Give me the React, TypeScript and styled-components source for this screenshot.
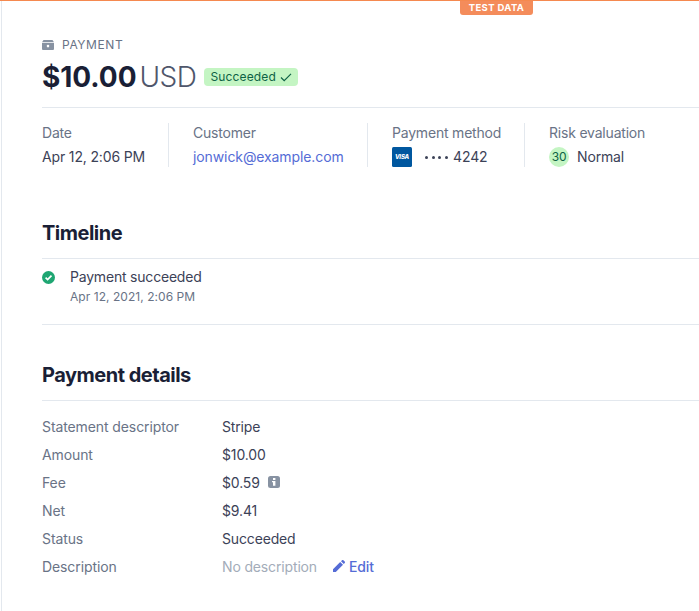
import React from "react";
import styled, { createGlobalStyle } from "styled-components";

const Global = createGlobalStyle`
  html, body { margin: 0; padding: 0; background: #fff; overflow: hidden; }
  body { font-family: Inter, "Liberation Sans", sans-serif; font-size: 14px; color: #3c4257; letter-spacing: -0.1px; }
`;

const Frame = styled.div`
  position: relative;
  box-sizing: border-box;
  width: 699px;
  height: 611px;
  border-top: 1px solid #f5894f;
  padding: 35px 0 0 42px;
  overflow: hidden;
  &::before {
    content: "";
    position: absolute;
    left: 1px;
    top: 0;
    bottom: 0;
    width: 1px;
    background: #e3e8ee;
  }
`;

const TestBadge = styled.div`
  position: absolute;
  top: 0;
  left: 460px;
  width: 73px;
  height: 14px;
  background: #f48c5b;
  border-radius: 0 0 3px 3px;
  color: #fff;
  font-size: 9.5px;
  line-height: 14px;
  font-weight: 700;
  text-align: center;
  letter-spacing: 0.35px;
`;

const Eyebrow = styled.div`
  display: flex;
  align-items: center;
  gap: 8px;
  height: 18px;
  color: #697386;
  font-size: 12px;
  line-height: 18px;
  font-weight: 400;
  letter-spacing: 0.6px;
`;

const TitleRow = styled.div`
  display: flex;
  align-items: center;
  height: 36px;
  margin-top: 5px;
`;

const Amount = styled.span`
  font-size: 28px;
  line-height: 36px;
  font-weight: 700;
  color: #1a1f36;
  letter-spacing: -0.05px;
`;

const Currency = styled.span`
  font-size: 28px;
  line-height: 36px;
  font-weight: 300;
  color: #4f566b;
  margin-left: 3px;
  letter-spacing: -0.5px;
`;

const StatusPill = styled.span`
  display: inline-flex;
  align-items: center;
  gap: 4px;
  height: 18px;
  margin-left: 8px;
  padding: 0 6px;
  background: #c4f5c3;
  border-radius: 4px;
  color: #0e6245;
  font-size: 12px;
  font-weight: 400;
  line-height: 18px;
  letter-spacing: 0.15px;
`;

const Rule = styled.div`
  height: 1px;
  background: #e3e8ee;
`;

const HeaderRule = styled(Rule)`
  margin-top: 12px;
`;

const Meta = styled.div`
  display: flex;
  margin-top: 15px;
  height: 44px;
`;

const MetaCell = styled.div<{ $w: number; $last?: boolean }>`
  box-sizing: border-box;
  width: ${(p) => p.$w}px;
  margin-right: ${(p) => (p.$last ? 0 : 24)}px;
  border-right: ${(p) => (p.$last ? "none" : "1px solid #e3e8ee")};
  flex: none;
`;

const MetaLabel = styled.div`
  font-size: 14px;
  line-height: 20px;
  color: #697386;
  white-space: nowrap;
  letter-spacing: -0.2px;
`;

const MetaValue = styled.div`
  display: flex;
  align-items: center;
  height: 20px;
  margin-top: 4px;
  font-size: 14px;
  line-height: 20px;
  color: #3c4257;
  white-space: nowrap;
  letter-spacing: -0.15px;
`;

const Link = styled.span`
  color: #556cd6;
  font-weight: 400;
  letter-spacing: -0.1px;
`;

const Dots = styled.span`
  display: inline-flex;
  gap: 3.7px;
  margin-left: 13px;
  margin-right: 5px;
`;

const Dot = styled.i`
  display: block;
  width: 3px;
  height: 3px;
  border-radius: 50%;
  background: #3c4257;
`;

const RiskScore = styled.span`
  display: inline-flex;
  justify-content: center;
  align-items: center;
  width: 20px;
  height: 20px;
  border-radius: 50%;
  background: #c4f5c3;
  color: #0e6245;
  font-size: 12px;
  margin-right: 8px;
`;

const SectionTitle = styled.h2<{ $top: number }>`
  margin: ${(p) => p.$top}px 0 0;
  font-size: 20px;
  line-height: 28px;
  font-weight: 700;
  color: #1a1f36;
  letter-spacing: -0.5px;
  padding-bottom: 11px;
  border-bottom: 1px solid #e3e8ee;
`;

const TimelineRow = styled.div`
  display: flex;
  gap: 15px;
  padding: 8px 0 17px;
  border-bottom: 1px solid #e3e8ee;
`;

const TimelineIcon = styled.div`
  width: 13px;
  height: 20px;
  display: flex;
  align-items: center;
  flex: none;
`;

const EventTitle = styled.div`
  font-size: 14px;
  line-height: 20px;
  color: #3c4257;
  letter-spacing: -0.2px;
`;

const EventTime = styled.div`
  font-size: 12px;
  line-height: 20px;
  color: #697386;
  letter-spacing: 0.05px;
`;

const Details = styled.div`
  display: grid;
  grid-template-columns: 180px 1fr;
  grid-auto-rows: 28px;
  margin-top: 11px;
`;

const DLabel = styled.div`
  display: flex;
  align-items: center;
  color: #697386;
  font-size: 14px;
`;

const DValue = styled.div`
  display: flex;
  align-items: center;
  color: #3c4257;
  font-size: 14px;
  letter-spacing: -0.15px;
`;

const Muted = styled.span`
  color: #a3acb9;
`;

const EditLink = styled.span`
  display: inline-flex;
  align-items: center;
  gap: 4px;
  margin-left: 16px;
  color: #556cd6;
  font-weight: 500;
`;

const InfoIcon = styled.svg`
  margin-left: 8px;
`;

export default function App() {
  return (
    <Frame>
      <Global />
      <TestBadge>TEST DATA</TestBadge>
      <Eyebrow>
        <svg width="12" height="12" viewBox="0 0 12 12">
          <path d="M1.5 1h9L12 3.2H0z" fill="#8792a2" />
          <path fillRule="evenodd" d="M0 4h12v6a1 1 0 0 1-1 1H1a1 1 0 0 1-1-1zM6 5.8a1.3 1.3 0 1 0 0 2.6 1.3 1.3 0 0 0 0-2.6z" fill="#8792a2" />
        </svg>
        PAYMENT
      </Eyebrow>
      <TitleRow>
        <Amount>$10.00</Amount>
        <Currency>USD</Currency>
        <StatusPill>
          Succeeded
          <svg width="12" height="12" viewBox="0 0 12 12" fill="none">
            <path d="M1 6.5L4.2 9.6 11 2.8" stroke="#0e6245" strokeWidth="1.2" />
          </svg>
        </StatusPill>
      </TitleRow>
      <HeaderRule />
      <Meta>
        <MetaCell $w={127}>
          <MetaLabel>Date</MetaLabel>
          <MetaValue>Apr 12, 2:06 PM</MetaValue>
        </MetaCell>
        <MetaCell $w={175}>
          <MetaLabel>Customer</MetaLabel>
          <MetaValue><Link>jonwick@example.com</Link></MetaValue>
        </MetaCell>
        <MetaCell $w={133}>
          <MetaLabel>Payment method</MetaLabel>
          <MetaValue>
            <svg width="20" height="20" viewBox="0 0 20 20">
              <rect width="20" height="20" rx="1.5" fill="#00579f" />
              <text x="10" y="12.2" textAnchor="middle" fontSize="6" fontWeight="800" fontStyle="italic" fill="#fff" fontFamily="Inter, sans-serif">VISA</text>
            </svg>
            <Dots><Dot /><Dot /><Dot /><Dot /></Dots>
            4242
          </MetaValue>
        </MetaCell>
        <MetaCell $w={140} $last>
          <MetaLabel>Risk evaluation</MetaLabel>
          <MetaValue><RiskScore>30</RiskScore>Normal</MetaValue>
        </MetaCell>
      </Meta>
      <SectionTitle $top={52}>Timeline</SectionTitle>
      <TimelineRow>
        <TimelineIcon>
          <svg width="13" height="13" viewBox="0 0 13 13">
            <circle cx="6.5" cy="6.5" r="6.5" fill="#1ea672" />
            <path d="M3.6 6.7L5.6 8.6 9.5 4.7" fill="none" stroke="#fff" strokeWidth="1.7" />
          </svg>
        </TimelineIcon>
        <div>
          <EventTitle>Payment succeeded</EventTitle>
          <EventTime>Apr 12, 2021, 2:06 PM</EventTime>
        </div>
      </TimelineRow>
      <SectionTitle $top={36}>Payment details</SectionTitle>
      <Details>
        <DLabel>Statement descriptor</DLabel><DValue>Stripe</DValue>
        <DLabel>Amount</DLabel><DValue>$10.00</DValue>
        <DLabel>Fee</DLabel>
        <DValue>
          $0.59
          <InfoIcon width="12" height="12" viewBox="0 0 12 12">
            <rect width="12" height="12" rx="2.5" fill="#8792a2" />
            <rect x="5" y="2" width="2.4" height="2" fill="#fff" />
            <path d="M4 5h3.4v4.8H5V6.3H4z" fill="#fff" />
          </InfoIcon>
        </DValue>
        <DLabel>Net</DLabel><DValue>$9.41</DValue>
        <DLabel>Status</DLabel><DValue>Succeeded</DValue>
        <DLabel>Description</DLabel>
        <DValue>
          <Muted>No description</Muted>
          <EditLink>
            <svg width="12" height="12" viewBox="0 0 12 12">
              <path d="M0 12V9.2L7.2 2 10 4.8 2.8 12zM8 1.2L9 .3a1 1 0 0 1 1.4 0l1.3 1.3a1 1 0 0 1 0 1.4l-.9 1z" fill="#556cd6" />
            </svg>
            Edit
          </EditLink>
        </DValue>
      </Details>
    </Frame>
  );
}
